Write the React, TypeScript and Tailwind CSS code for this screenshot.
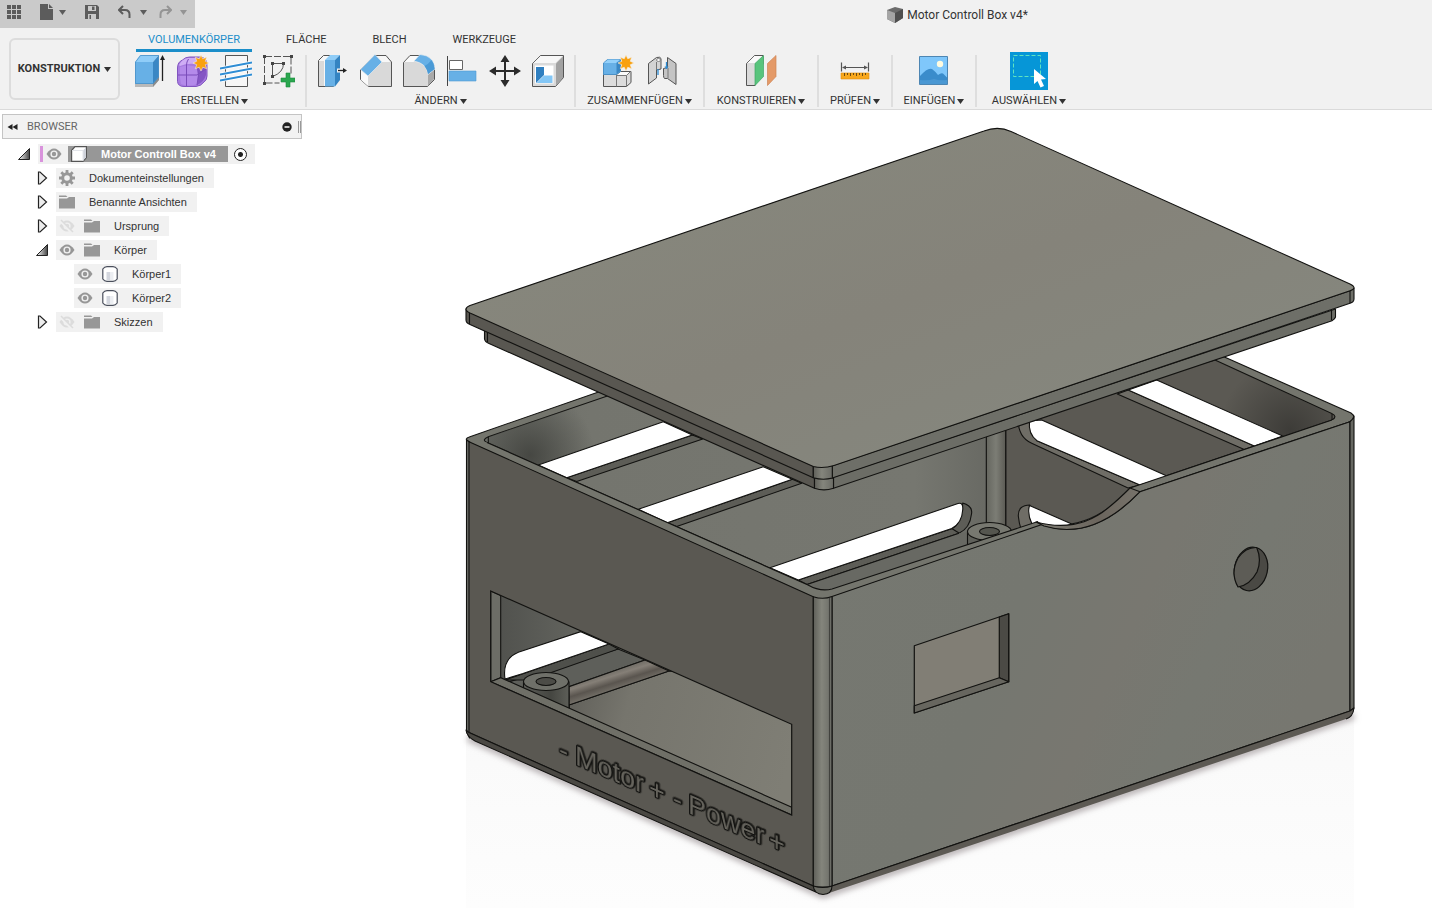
import type { ReactNode } from "react";

/* ---------- small shared pieces ---------- */

function Caret({ className = "text-[#333]" }: { className?: string }) {
  return (
    <svg viewBox="0 0 7 5" className={`h-[5px] w-[7px] shrink-0 ${className}`} aria-hidden="true">
      <path d="M0 0h7L3.5 5z" fill="currentColor" />
    </svg>
  );
}

function Star({ x, y }: { x: number; y: number }) {
  const points = Array.from({ length: 16 }, (_, i) => {
    const r = i % 2 === 0 ? 8 : 4.6;
    const a = (i * Math.PI) / 8;
    return `${(x + r * Math.sin(a)).toFixed(2)},${(y - r * Math.cos(a)).toFixed(2)}`;
  }).join(" ");
  return <polygon points={points} fill="#f9a10f" stroke="#f3f0ea" strokeWidth="0.6" />;
}

function ToolIcon({ x, children }: { x: number; children: ReactNode }) {
  return (
    <svg viewBox={`${x} 54 32 34`} className="h-[34px] w-8" aria-hidden="true">
      {children}
    </svg>
  );
}

/* ---------- ribbon icons ---------- */

const extrude = (
  <ToolIcon x={135}>
    <path d="M136 83h18l6-7v4l-6 7h-18z" fill="#b9b9b9" />
    <path d="M154 83l6-7v4l-6 7z" fill="#8c8c8c" />
    <path d="M136 62h18v22h-18z" fill="#67b0e6" />
    <path d="M136 62l5-7h19l-6 7z" fill="#8fcdf8" />
    <path d="M154 62l6-7v22l-6 7z" fill="#3a87c4" />
    <path d="M136.5 83.5v-21.500l5-6.500h18v21l-5.500 7z" fill="none" stroke="#4a90c6" strokeWidth="0.8" />
    <path d="M163.500 81V58" stroke="#222" strokeWidth="1.300" />
    <path d="M161 60l2.500-5 2.500 5z" fill="#222" />
  </ToolIcon>
);

const form = (
  <ToolIcon x={178}>
    <path d="M178.500 68q0-6 5-8 3-3 7-3h12q6 2 5.500 10v9q0 4-3 6-3 4-8 4.500h-12q-6 0-6.500-5z" fill="#a77be0" stroke="#8154bf" />
    <path d="M180 65q3-6 9-7h10l-3 6q-8-1-15 2z" fill="#cfaef5" />
    <path d="M199 66q7-2 8-1v10q-2 7-9 10z" fill="#8556c4" />
    <path d="M181 67q8-3 17 0 2 8 0 17-8 3-16 0-2-8-1-17z" fill="#b48aea" />
    <path d="M189.500 59q-2 3-2 6v21M179 75h19l9-6M198 65q3 10 0 20" fill="none" stroke="#7b4dba" strokeWidth="1" />
    <Star x={202} y={63} />
  </ToolIcon>
);

const coil = (
  <ToolIcon x={221}>
    <path d="M226.500 55.500h22v31h-22z" fill="#f6f6f6" stroke="#555" />
    <path d="M221 68.500l32-6M221 74.500l32-6M221 80.500l32-6" stroke="#fff" strokeWidth="3.500" />
    <path d="M221 68.500l32-6M221 74.500l32-6M221 80.500l32-6" stroke="#2f8dd4" strokeWidth="2" />
  </ToolIcon>
);

const sketch = (
  <ToolIcon x={264}>
    <path d="M266 56.500h26v18M265.500 57v26h15" fill="none" stroke="#555" strokeDasharray="7 2" />
    <path d="M273.500 63.500h11q0 9-11 13z" fill="none" stroke="#555" />
    <path d="M264 55h3v3h-3zM291 55h3v3h-3zM264 82h3v3h-3zM272 62h3v3h-3zM283 62h3v3h-3zM272 75h3v3h-3z" fill="#444" />
    <path d="M287 73h4v5h5v4h-5v5h-4v-5h-5v-4h5z" fill="#2aa74f" stroke="#1b8a3c" strokeWidth="0.6" />
  </ToolIcon>
);

const pressPull = (
  <ToolIcon x={318}>
    <path d="M319.500 60.500l5-5h10v31h-15z" fill="#f7f7f7" stroke="#555" />
    <path d="M320 61h5v25h-5z" fill="#d9d9d9" />
    <path d="M326 60h10v26.500h-10z" fill="#67b0e6" />
    <path d="M326 60l5-5h10l-5 5z" fill="#8fcdf8" />
    <path d="M336 60l5-5v25l-5 6.500z" fill="#3484c2" />
    <path d="M338 68.500h7v-2l4 4-4 4v-2h-7z" fill="#f1f1f1" />
    <path d="M339 70.500h6" stroke="#222" strokeWidth="1.300" />
    <path d="M344 68l4 2.500-4 2.500z" fill="#222" />
  </ToolIcon>
);

const chamfer = (
  <ToolIcon x={361}>
    <path d="M361.500 69.500l14.500-14h11l5.500 6.500v24.500h-23l-8-7z" fill="#d9d9d9" stroke="#555" />
    <path d="M376 56h10.500l5 6h-9.500z" fill="#f7f7f7" />
    <path d="M362 70l7 6v10l-7-6z" fill="#fafafa" />
    <path d="M376 54.500l7 7.500-14 14-7.500-6.500z" fill="#67b0e6" stroke="#f1f1f1" strokeWidth="0.6" />
  </ToolIcon>
);

const fillet = (
  <ToolIcon x={404}>
    <path d="M404.500 62.500l6.500-7h11q13 3 13.500 14v10l-7 7h-24z" fill="#d9d9d9" stroke="#555" />
    <path d="M405.500 62l6-6h9l-6 6z" fill="#fafafa" />
    <path d="M429 74l6-4v9l-6 7z" fill="#a9a9a9" />
    <path d="M415 61l6-6.500q14 1 15 14.500l-7 5.500q-1-11-14-13.500z" fill="#67b0e6" stroke="#f1f1f1" strokeWidth="0.6" />
    <path d="M429 74l6.500-5q0-5-3-9-3 4-7 6 3 4 3.500 8z" fill="#4a9ad6" />
  </ToolIcon>
);

const align = (
  <ToolIcon x={447}>
    <path d="M448.500 56v30" stroke="#444" />
    <path d="M450.500 60.500h13v9h-13z" fill="#fff" stroke="#666" />
    <path d="M450 71h27v10h-27z" fill="#67b0e6" stroke="#4d9bd4" strokeWidth="0.6" />
  </ToolIcon>
);

const move = (
  <ToolIcon x={490}>
    <path d="M506 59v24M494 71h24" stroke="#2b2b2b" strokeWidth="2" />
    <path d="M506 55l4.500 7h-9zM506 87l4.500-7h-9zM490 71l7-4.500v9zM522 71l-7-4.500v9z" fill="#2b2b2b" />
  </ToolIcon>
);

const shell = (
  <ToolIcon x={533}>
    <path d="M533.500 63.500l8-8h23v22l-8 9h-23z" fill="#dadada" stroke="#555" />
    <path d="M534.500 63l7-7h22l-7 7z" fill="#f7f7f7" />
    <path d="M557 63.500l7-7v21l-7 8z" fill="#a2a2a2" />
    <path d="M536 65.500h18.500v18h-18.500z" fill="#fff" />
    <path d="M537 67h8v8l-8 8z" fill="#2f7fc0" />
    <path d="M545 75.500h8.500v7.500h-16z" fill="#83c6f5" />
  </ToolIcon>
);

const newComponent = (
  <ToolIcon x={602}>
    <path d="M603.500 74.500h13l4-3h10.500v11l-4.500 4h-23z" fill="#dcdcdc" stroke="#555" />
    <path d="M617 75l3.500-3h10l-4 3z" fill="#fafafa" />
    <path d="M616.500 75v11.500M617 75.500h9.500v11M626.500 75.500l4-4" fill="none" stroke="#777" />
    <path d="M603.500 63l4-3.500h13v12l-4 3h-13z" fill="#67b0e6" stroke="#4a90c6" />
    <path d="M604 63l4-3.500h12l-4 3.500z" fill="#93d0fa" />
    <path d="M616.500 63l4-3v11l-4 3z" fill="#3a87c4" />
    <Star x={626} y={63} />
  </ToolIcon>
);

const joint = (
  <ToolIcon x={646}>
    <path d="M648.500 63.500l8-6q4-1 4.500 1v10.500l-4.500 1v8l-8 6z" fill="#d4d4d4" stroke="#555" />
    <path d="M656.500 62v8" stroke="#777" />
    <ellipse cx="658.500" cy="60" rx="2" ry="1.500" fill="#f7f7f7" stroke="#666" strokeWidth="0.700" />
    <path d="M667.500 57.500l8.500 6v21l-8.500-6h-3q-1-1-1-3v-7l4-1z" fill="#c4c4c4" stroke="#555" />
    <path d="M668 68v10" stroke="#777" />
    <path d="M658 69v6M666.500 62v7" stroke="#2f8dd4" strokeWidth="1.300" />
    <path d="M664.500 66.500l2 2.500 2-2.500z" fill="#2f8dd4" />
  </ToolIcon>
);

const plane = (
  <ToolIcon x={746}>
    <path d="M747.500 63.500l8-8h8.500v8l-8 22h-8.500z" fill="#dadada" stroke="#555" />
    <path d="M748.500 63l7-7h8l-7 7z" fill="#fafafa" />
    <path d="M756 63.500l8.500-8v21l-8.500 9z" fill="#58c47c" stroke="#41a865" strokeWidth="0.700" />
    <path d="M768.500 63.500l8.500-8v21l-8.500 9z" fill="#e49a68" stroke="#cf8455" strokeWidth="0.700" />
  </ToolIcon>
);

const measure = (
  <ToolIcon x={840}>
    <path d="M842.500 62.500v9M869.500 62.500v9M844 67.500h24" stroke="#555" strokeWidth="1.200" />
    <path d="M843 67.500l4-2v4zM869 67.500l-4-2v4z" fill="#555" />
    <path d="M842 73h28v6h-28z" fill="#f8a71b" stroke="#e08f0a" strokeWidth="0.600" />
    <path d="M845.500 73v3M848.500 73v2M851.500 73v3M854.500 73v2M857.500 73v3M860.500 73v2M863.500 73v3M866.500 73v2" stroke="#6b4a10" />
  </ToolIcon>
);

const insert = (
  <ToolIcon x={919}>
    <path d="M920.500 56.500h28v28h-28z" fill="#7fc7fb" stroke="#4d86b3" />
    <path d="M921 76q8-9 12-7 4 3 6 6 4-3 6-0.500l3 3v6.500h-27z" fill="#3a8ccb" />
    <path d="M921 80q8 1 14-1 6 2 13 1v4h-27z" fill="#4b98d3" />
    <circle cx="941" cy="64" r="3.200" fill="#fffbe0" />
  </ToolIcon>
);

const select = (
  <svg viewBox="1010 52 38 38" className="size-[38px] bg-[#0696d7]" aria-hidden="true">
    <path d="M1013.500 55.500h27v21h-27z" fill="none" stroke="#5fe3c0" strokeDasharray="4 2" />
    <path d="M1034 69v15l3.500-3 3 6.500 3.500-1.500-3-6.500 5-0.500z" fill="#fff" />
  </svg>
);

type Group = { label: string; width: string; gap: string; tools: [string, ReactNode][] };

const groups: Group[] = [
  { label: "ERSTELLEN", width: "w-[183px]", gap: "gap-[11px]", tools: [["Extrusion", extrude], ["Form", form], ["Spirale", coil], ["Skizze", sketch]] },
  { label: "ÄNDERN", width: "w-[269px]", gap: "gap-[11px]", tools: [["Drücken/Ziehen", pressPull], ["Fase", chamfer], ["Abrunden", fillet], ["Ausrichten", align], ["Verschieben", move], ["Schale", shell]] },
  { label: "ZUSAMMENFÜGEN", width: "w-[129px]", gap: "gap-3", tools: [["Neue Komponente", newComponent], ["Verbindung", joint]] },
  { label: "KONSTRUIEREN", width: "w-[114px]", gap: "gap-3", tools: [["Ebene", plane]] },
  { label: "PRÜFEN", width: "w-[74px]", gap: "gap-3", tools: [["Messen", measure]] },
  { label: "EINFÜGEN", width: "w-[84px]", gap: "gap-3", tools: [["Bild", insert]] },
  { label: "AUSWÄHLEN", width: "w-[104px]", gap: "gap-3", tools: [["Auswahl", select]] },
];

const tabs = ["VOLUMENKÖRPER", "FLÄCHE", "BLECH", "WERKZEUGE"];

/* ---------- header ---------- */

function QuickAccess() {
  return (
    <div className="flex h-7 w-[195px] shrink-0 items-start bg-[#cacaca] pt-1 pl-[7px] text-[#5c5c5c]">
      <button aria-label="Datenbereich" className="mr-[19px]">
        <svg viewBox="0 0 14 16" className="h-4 w-3.5">
          <path d="M0 1h4v4H0zM5 1h4v4H5zM10 1h4v4h-4zM0 6h4v4H0zM5 6h4v4H5zM10 6h4v4h-4zM0 11h4v4H0zM5 11h4v4H5zM10 11h4v4h-4z" fill="currentColor" />
        </svg>
      </button>
      <button aria-label="Datei" className="mr-[19px] flex items-center gap-1.5">
        <svg viewBox="0 0 13 16" className="h-4 w-[13px]">
          <path d="M0 0h8v5h5v11H0zM9 0l4 4H9z" fill="currentColor" />
        </svg>
        <Caret className="text-[#5c5c5c]" />
      </button>
      <button aria-label="Speichern" className="mr-[19px]">
        <svg viewBox="0 0 14 16" className="h-4 w-3.5">
          <path fillRule="evenodd" d="M0 1h12l2 2v12H0zM3 2v5h8V2zM3 10v5h8v-5zM7 2.500h2.500V6H7zM4.500 11H6v4H4.500z" fill="currentColor" />
        </svg>
      </button>
      <button aria-label="Rückgängig" className="mr-3 flex items-center gap-[9px]">
        <svg viewBox="0 0 13 16" className="h-4 w-[13px]">
          <path d="M5 2L1 6l4 4M1.500 6H7q4.500 0 4.500 4.500V14" fill="none" stroke="currentColor" strokeWidth="2" />
        </svg>
        <Caret className="text-[#5c5c5c]" />
      </button>
      <button aria-label="Wiederherstellen" className="flex items-center gap-2 text-[#949494]">
        <svg viewBox="0 0 13 16" className="h-4 w-[13px]">
          <path d="M8 2l4 4-4 4M11.500 6H6q-4.500 0-4.500 4.500V14" fill="none" stroke="currentColor" strokeWidth="2" />
        </svg>
        <Caret className="text-[#949494]" />
      </button>
    </div>
  );
}

function Header() {
  return (
    <header className="border-b border-[#dadada] bg-[#f1f1f1] font-[Roboto,sans-serif] text-[11px] leading-3 text-[#333]">
      <div className="flex h-7">
        <QuickAccess />
        <div className="flex flex-1 items-center justify-center gap-1 pt-0.5 pl-[288px]">
          <svg viewBox="0 0 16 16" className="size-4" aria-hidden="true">
            <path d="M0 3l8-3 8 2v9l-8 5-8-4z" fill="#6b6b6b" />
            <path d="M0 3l8 3v10l-8-4z" fill="#a5a5a5" />
            <path d="M8 6l8-4v9l-8 5z" fill="#4f4f4f" />
          </svg>
          <h1 className="text-xs">Motor Controll Box v4*</h1>
        </div>
      </div>
      <div className="flex">
        <button className="mt-2.5 ml-[9px] flex h-[62px] w-[111px] shrink-0 items-center justify-center gap-1 rounded-md border-2 border-[#dcdcdc] font-bold">
          KONSTRUKTION
          <Caret />
        </button>
        <div className="flex flex-1 flex-col pl-1">
          <nav className="flex h-6 gap-[22px] pl-3">
            {tabs.map((tab, i) => (
              <button
                key={tab}
                className={
                  i === 0
                    ? "border-b-3 border-[#1b8ec9] px-3 pt-0.5 text-[#1b8ec9]"
                    : "border-b-3 border-transparent px-3 pt-0.5"
                }
              >
                {tab}
              </button>
            ))}
          </nav>
          <div className="flex pb-0.5">
            {groups.map((group, i) => (
              <section key={group.label} className={`flex shrink-0 ${group.width}`}>
                <div className="flex flex-1 flex-col items-center">
                  <div className={`flex h-[38px] items-center ${group.gap}`}>
                    {group.tools.map(([name, icon]) => (
                      <button key={name} aria-label={name}>
                        {icon}
                      </button>
                    ))}
                  </div>
                  <button className="mt-[5px] flex items-center gap-0.5">
                    {group.label}
                    <Caret />
                  </button>
                </div>
                {i < groups.length - 1 && <div className="mt-[3px] w-0.5 bg-[#dedede]" />}
              </section>
            ))}
          </div>
        </div>
      </div>
    </header>
  );
}

/* ---------- browser tree ---------- */

function Eye({ off = false }: { off?: boolean }) {
  return (
    <svg viewBox="0 0 16 16" className={off ? "size-4 text-[#dcdcdc]" : "size-4 text-[#979797]"} aria-hidden="true">
      <path d="M0.500 8Q4 2.500 8 2.500T15.500 8Q12 13.500 8 13.500T0.500 8z" fill="currentColor" />
      <circle cx="8" cy="8" r="3.600" fill="#f1f1f1" />
      <circle cx="8" cy="8" r="2.200" fill="currentColor" />
      {off && (
        <>
          <path d="M1.500 3l12 12" stroke="#f1f1f1" strokeWidth="3" />
          <path d="M2 2l12 12" stroke="currentColor" strokeWidth="1.500" />
        </>
      )}
    </svg>
  );
}

function Folder() {
  return (
    <svg viewBox="0 0 16 16" className="size-4" aria-hidden="true">
      <path d="M0 1.500h7l1.500 1.500H0zM0 4.500h8l2-1.500h6V14.500H0z" fill="#979797" />
    </svg>
  );
}

function Gear() {
  return (
    <svg viewBox="0 0 16 16" className="size-4" aria-hidden="true">
      <circle cx="8" cy="8" r="4.300" fill="none" stroke="#979797" strokeWidth="3" />
      <path d="M8 0v3M8 13v3M0 8h3M13 8h3M2.300 2.300l2.200 2.200M11.500 11.500l2.200 2.200M2.300 13.700l2.200-2.200M11.500 4.500l2.200-2.200" stroke="#979797" strokeWidth="2.800" />
    </svg>
  );
}

function Body() {
  return (
    <svg viewBox="0 0 16 16" className="size-4" aria-hidden="true">
      <path d="M0.800 3Q2.500 0.600 5 0.600h6Q13.500 0.600 15.200 3v10Q13.500 15.400 11 15.400h-6Q2.500 15.400 0.800 13z" fill="#fff" stroke="#4a4f5c" strokeWidth="1.200" />
      <path d="M4.500 6h4v8h-4z" fill="#d3d6de" />
      <path d="M8.500 6h3v8h-3z" fill="#eceef2" />
    </svg>
  );
}

function Twisty({ open }: { open: boolean }) {
  return (
    <svg viewBox="0 0 12 14" className="h-3.5 w-3 shrink-0" aria-hidden="true">
      {open ? (
        <path d="M11.500 1.500v11H0.500z" fill="url(#twistyFill)" stroke="#222" />
      ) : (
        <path d="M2.500 1h1.500l6.500 6L4 13H2.500z" fill="#ededed" stroke="#222" strokeWidth="1.200" />
      )}
      <defs>
        <linearGradient id="twistyFill">
          <stop offset="0.200" stopColor="#ddd" />
          <stop offset="1" stopColor="#444" />
        </linearGradient>
      </defs>
    </svg>
  );
}

type Node = { label: string; indent: string; twisty?: boolean; open?: boolean; icons: ReactNode[] };

const nodes: Node[] = [
  { label: "Dokumenteinstellungen", indent: "pl-9", twisty: true, icons: [<Gear key="g" />] },
  { label: "Benannte Ansichten", indent: "pl-9", twisty: true, icons: [<Folder key="f" />] },
  { label: "Ursprung", indent: "pl-9", twisty: true, icons: [<Eye key="e" off />, <Folder key="f" />] },
  { label: "Körper", indent: "pl-9", twisty: true, open: true, icons: [<Eye key="e" />, <Folder key="f" />] },
  { label: "Körper1", indent: "pl-[74px]", icons: [<Eye key="e" />, <Body key="b" />] },
  { label: "Körper2", indent: "pl-[74px]", icons: [<Eye key="e" />, <Body key="b" />] },
  { label: "Skizzen", indent: "pl-9", twisty: true, icons: [<Eye key="e" off />, <Folder key="f" />] },
];

function BrowserPanel() {
  return (
    <aside className="w-[302px] shrink-0 pt-1 text-[11px] leading-3 text-[#333]">
      <div className="ml-0.5 flex h-[25px] items-center border border-[#c4c4c4] bg-[#f2f2f2] pl-1">
        <button aria-label="Einklappen">
          <svg viewBox="0 0 12 8" className="h-2 w-3">
            <path d="M5.500 1v6L0.500 4zM10.500 1v6L5.500 4z" fill="#222" />
          </svg>
        </button>
        <h2 className="ml-2 flex-1 font-[Roboto,sans-serif] text-[#666]">BROWSER</h2>
        <button aria-label="Schließen" className="mr-1.5">
          <svg viewBox="0 0 10 10" className="size-2.5">
            <circle cx="5" cy="5" r="4.700" fill="#222" />
            <path d="M2.500 5h5" stroke="#fff" strokeWidth="1.500" />
          </svg>
        </button>
        <div className="h-3 w-[3px] border-x border-[#999]" />
      </div>

      <ul className="pt-[3px]">
        <li className="flex h-6 items-center gap-2 pl-[18px]">
          <Twisty open />
          <div className="flex h-5 items-center bg-[#f1f1f1] pr-2 pl-0.5">
            <div className="h-4 w-[3px] bg-[#d993dc]" />
            <button aria-label="Sichtbarkeit" className="ml-[3px]">
              <Eye />
            </button>
            <div className="ml-1.5 flex h-4 items-center bg-[#979797] pr-3 pl-[3px] font-bold text-white">
              <svg viewBox="0 0 16 16" className="mr-3.5 size-4" aria-hidden="true">
                <path d="M0.600 4.500L4 0.600h11.400v10.900L12 15.400H0.600z" fill="#fff" stroke="#555" strokeWidth="1.200" />
                <path d="M12 4.500l3-3v10l-3 3z" fill="#cfd2da" />
                <path d="M1 4.500h11v10.500" fill="none" stroke="#e3e5ea" />
              </svg>
              Motor Controll Box v4
            </div>
            <label className="ml-1.5 flex items-center">
              <input type="radio" defaultChecked aria-label="Komponente aktivieren" className="size-[13px] appearance-none rounded-full border border-[#222] bg-[radial-gradient(#222_2px,white_3px)]" />
            </label>
          </div>
        </li>
        {nodes.map((node) => (
          <li key={node.label} className={`flex h-6 items-center gap-2 ${node.indent}`}>
            {node.twisty && <Twisty open={!!node.open} />}
            <div className="flex h-5 items-center gap-[9px] bg-[#f1f1f1] pr-2.5 pl-[3px]">
              {node.icons}
              <span className="pl-[5px]">{node.label}</span>
            </div>
          </li>
        ))}
      </ul>
    </aside>
  );
}

/* ---------- model view ---------- */

function Model() {
  return (
    <svg viewBox="302 110 1130 798" className="min-w-0 flex-1" role="img" aria-label="Motor Controll Box">
      <defs>
        <linearGradient id="lidTop" x1="0" y1="0" x2="1" y2="1">
          <stop offset="0" stopColor="#87857b" />
          <stop offset="0.250" stopColor="#86867c" />
          <stop offset="0.500" stopColor="#85837a" />
          <stop offset="0.750" stopColor="#85867d" />
          <stop offset="1" stopColor="#848077" />
        </linearGradient>
        <linearGradient id="rightFace" x1="0" y1="0" x2="1" y2="0.400">
          <stop offset="0" stopColor="#767871" />
          <stop offset="0.450" stopColor="#757770" />
          <stop offset="0.650" stopColor="#787770" />
          <stop offset="0.800" stopColor="#767871" />
          <stop offset="1" stopColor="#777770" />
        </linearGradient>
        <linearGradient id="post">
          <stop offset="0" stopColor="#5f5f59" />
          <stop offset="0.450" stopColor="#84857c" />
          <stop offset="1" stopColor="#6b6c66" />
        </linearGradient>
        <linearGradient id="cornerPost">
          <stop offset="0" stopColor="#65665f" />
          <stop offset="0.500" stopColor="#7c7d75" />
          <stop offset="1" stopColor="#5b5a54" />
        </linearGradient>
        <linearGradient id="backWall" gradientUnits="userSpaceOnUse" x1="490" y1="0" x2="990" y2="0">
          <stop offset="0" stopColor="#6b6d67" />
          <stop offset="0.200" stopColor="#74756e" />
          <stop offset="0.850" stopColor="#767770" />
          <stop offset="1" stopColor="#686963" />
        </linearGradient>
        <radialGradient id="shadeL" gradientUnits="userSpaceOnUse" cx="530" cy="455" r="65">
          <stop offset="0" stopColor="#3c3d39" stopOpacity="0.800" />
          <stop offset="1" stopColor="#3c3d39" stopOpacity="0" />
        </radialGradient>
        <radialGradient id="shadeR" gradientUnits="userSpaceOnUse" cx="1290" cy="430" r="70">
          <stop offset="0" stopColor="#33322f" stopOpacity="0.750" />
          <stop offset="1" stopColor="#33322f" stopOpacity="0" />
        </radialGradient>
        <linearGradient id="windowWall" gradientUnits="userSpaceOnUse" x1="500" y1="0" x2="600" y2="0">
          <stop offset="0" stopColor="#51524e" />
          <stop offset="1" stopColor="#686963" />
        </linearGradient>
        <linearGradient id="floor" gradientUnits="userSpaceOnUse" x1="570" y1="700" x2="790" y2="760">
          <stop offset="0" stopColor="#62615b" />
          <stop offset="0.250" stopColor="#76756d" />
          <stop offset="1" stopColor="#7f7e75" />
        </linearGradient>
        <linearGradient id="round" gradientUnits="userSpaceOnUse" x1="605" y1="670" x2="612" y2="692">
          <stop offset="0" stopColor="#65635c" />
          <stop offset="0.350" stopColor="#857f77" />
          <stop offset="0.650" stopColor="#5a554f" />
          <stop offset="1" stopColor="#77736b" />
        </linearGradient>
        <linearGradient id="boss">
          <stop offset="0" stopColor="#5c5d58" />
          <stop offset="0.600" stopColor="#454641" />
          <stop offset="1" stopColor="#5d5e58" />
        </linearGradient>
        <linearGradient id="notch">
          <stop offset="0" stopColor="#807f76" />
          <stop offset="0.600" stopColor="#6b655d" />
          <stop offset="1" stopColor="#77736b" />
        </linearGradient>
        <linearGradient id="ground" x1="0" y1="0" x2="0" y2="1">
          <stop offset="0" stopColor="#f9f9f9" />
          <stop offset="1" stopColor="#fdfdfd" />
        </linearGradient>
        <filter id="soft" x="-10%" y="-10%" width="120%" height="120%">
          <feGaussianBlur stdDeviation="3" />
        </filter>
        <clipPath id="frontWindow">
          <path d="M490.700 591L791.700 724.300V815L490.700 681.700z" />
        </clipPath>
      </defs>

      {/* ground and contact shadow */}
      <path d="M466 735L823 893 1354 714V908H466z" fill="url(#ground)" />
      <path d="M468 738L823 895 1354 716" fill="none" stroke="#a9a2a4" strokeWidth="6" filter="url(#soft)" />

      <g stroke="#121210" strokeWidth="1.100" strokeLinejoin="round">
        {/* rim, seen around the interior */}
        <path d="M470 436.700L900 287 1225 357.300 1351 413Q1357 417 1350 421.700L832 596.500Q823 600 813.300 596.700L469 441.700Q463 439 470 436.700z" fill="#74756d" />

        {/* interior walls */}
        <path d="M488.300 436.700L800 330H987V560L832 589Q820 592 808 585L487 442.500Q481 440 488.300 436.700z" fill="url(#backWall)" />
        <path d="M488 437L606 396 664 421 538 465 488 443z" fill="url(#shadeL)" stroke="none" />
        <path d="M488.300 437V443" fill="none" />
        <path d="M1005.700 420L1215 360 1331.700 413.500Q1338 416.500 1332 420L1130 488Q1090 534 1038 523L1005.700 533z" fill="#5b5953" />
        <path d="M1215 360L1331 414v6l-50 17-125-57z" fill="url(#shadeR)" stroke="none" />
        <path d="M1332 414V420" fill="none" />
        <path d="M986.300 420H1005.700V535L986.300 540z" fill="url(#cornerPost)" />

        {/* slots in the back wall */}
        <g fill="#5d5d57">
          <path d="M566.700 477.700L692.300 435l10.400 4L576.700 481.500z" />
          <path d="M667.300 522.700L792.300 479.300l9.400 4L676.700 526.500z" />
          <path d="M798.300 580L951.700 528.700Q962 524 962.700 503 973 506 971.500 514 970 528 959 533.300L807 584.500z" />
        </g>
        <path d="M807 584.500L959 533.300 968 532 990 545 832 595Q820 592 812 588z" fill="#686963" stroke="none" />
        <path d="M807 584.500L959 533.300M951.700 528.500L959 533" fill="none" />
        <g fill="#fff">
          <path d="M538.300 465L663.300 421.700 692.300 435 566.700 477.700z" />
          <path d="M638.300 509.300L763.300 466.700 792.300 479.300 667.300 522.700z" />
          <path d="M770 567.700L958 503.500Q963.500 502 962.700 510 962 523 951.700 528.500L798.300 580z" />
        </g>

        {/* slots in the side wall */}
        <g fill="#6f6d66">
          <path d="M1018.300 420Q1018 437 1031.700 443.300L1128 488 1140 485 1037 440.700 1029 420z" />
          <path d="M1117.300 394L1128.300 390 1254.300 446 1244.300 449.500z" />
          <path d="M1030 505Q1018 505 1018.300 516 1019 523 1021 529L1032 525z" />
        </g>
        <g fill="#fff">
          <path d="M1041.700 420L1168 476.500 1140 485 1037 440.700Q1028 434 1029.500 421z" />
          <path d="M1128.300 390L1156.700 380 1282.700 436 1254.300 446z" />
          <path d="M1029.500 505.500L1071.700 524 1060 528 1032 524Q1027 514 1029.500 505.500z" />
        </g>

        {/* screw boss at the back */}
        <path d="M967.500 531V545L1012 532V531z" fill="#5f605a" />
        <ellipse cx="989.500" cy="531.500" rx="22" ry="9" fill="#777870" />
        <ellipse cx="989.500" cy="531.500" rx="10" ry="4" fill="#55564f" />

        {/* front and right rim with cable notch */}
        <path d="M487 442.500L808 585Q820 592 832 589L1038 521.500 1042 524.500 832 596.500Q823 600 813.300 596.700L469 441.700 478 440z" fill="#74756d" stroke="none" />
        <path d="M487 442.500L808 585Q820 592 832 589L1038 521.500" fill="none" />
        <path d="M1130 488L1332 420 1350 421.700 1140 491.700z" fill="#74756d" stroke="none" />
        <path d="M1130 488L1332 420M1140 491.700L1350 421.700" />

        {/* outer faces */}
        <path d="M466.500 440L469.500 442V738L466.500 732z" fill="#6b6c66" />
        <path d="M469 441.700L813.300 596.700V886L469 732.500z" fill="#5a5852" />
        <path d="M832 596.500L1042 524.500Q1091 543 1140 491.700L1350 421.700V711L832 886z" fill="url(#rightFace)" />
        <path d="M1036 522Q1078 533 1108 508 1118 500 1130 488L1140 491.700Q1093 541 1044 526z" fill="url(#notch)" />
        <path d="M1350 421.700Q1353.500 419 1354 416V708L1350 711z" fill="#666761" />
        <path d="M813.300 596.700Q823 600 832 596.500V887H813.300z" fill="url(#post)" />
        <path d="M829.500 598V886" strokeOpacity="0.500" />

        {/* bottom bevel */}
        <path d="M469 732.500L813.300 886 817 892.500 475 741Q467 737 466 730z" fill="#4a4843" />
        <path d="M832 886L1350 711 1354 708Q1353 717 1346 719L829 893z" fill="#5d5a54" stroke="none" />
        <path d="M832 886L1350 711 1354 708Q1353 717 1346 719" fill="none" />
        <path d="M813.300 886Q823 889 832 886 832 894 823 894.500 814 894 813.300 886z" fill="#6c6c65" />
      </g>

      {/* front window */}
      <g clipPath="url(#frontWindow)" stroke="#121210" strokeWidth="1.100">
        <path d="M490 590H792V816H490z" fill="url(#windowWall)" stroke="none" />
        <path d="M569 705L669 671 800 690V830H569z" fill="url(#floor)" />
        <path d="M505 683L618 649 645 660 569 686.700V710z" fill="#5e5f5a" />
        <path d="M505 680L609 644 618.300 649 530 680z" fill="#4f504b" />
        <path d="M569 686.700L645 660 669 671 569 705z" fill="url(#round)" />
        <path d="M518.300 652.300L580.700 631.700 609 644 523 673.500 505 679Q502 659 518.300 652.300z" fill="#fff" />
        <path d="M523.500 682V700L569 720V682z" fill="url(#boss)" />
        <ellipse cx="546" cy="681.500" rx="22.500" ry="9" fill="#6f7069" />
        <ellipse cx="546" cy="681.500" rx="10" ry="4" fill="#4c4c47" />
        <path d="M490.700 591L500.700 595.500V677.700L490.700 681.700z" fill="#6c6d66" />
        <path d="M490.700 681.700L500.700 677.700 791.700 807.300V815z" fill="#6f6f67" />
      </g>
      <path d="M490.700 591L791.700 724.300V815L490.700 681.700z" fill="none" stroke="#121210" strokeWidth="1.200" />

      {/* display cut-out and round hole */}
      <g stroke="#121210" strokeWidth="1.200" strokeLinejoin="round">
        <path d="M914.300 645.700L1008.700 613.700V681.700L914.300 713z" fill="#817e75" />
        <path d="M999.300 617L1008.700 613.700V681.700L999.300 677.700z" fill="#4b4a45" />
        <path d="M914.300 705.700L999.300 677.700 1008.700 681.700 914.300 713z" fill="#67665f" />
        <ellipse cx="1251" cy="569" rx="16.500" ry="22" transform="rotate(12 1251 569)" fill="#4a4944" />
        <path d="M1256.700 547.500Q1262 560 1257 572 1250 585 1238 587 1230 573 1238 558 1246 547 1256.700 547.500z" fill="#5d5c56" />
      </g>

      {/* embossed lettering on the sheared front plane */}
      <text
        transform="matrix(1 0.430 0 1 0 0)"
        y="517"
        className="font-['Liberation_Sans',Arial,sans-serif] text-[27px] drop-shadow-[1px_-1px_0_#2a2925]"
        fill="#66645d"
        stroke="#121210"
        strokeWidth="2.600"
        strokeLinejoin="round"
        paintOrder="stroke"
      >
        <tspan x="559">-</tspan>
        <tspan x="575">Motor</tspan>
        <tspan x="649">+</tspan>
        <tspan x="673">-</tspan>
        <tspan x="688">Power</tspan>
        <tspan x="769">+</tspan>
      </text>

      {/* lid */}
      <g stroke="#121210" strokeWidth="1.100" strokeLinejoin="round">
        <path d="M484.500 330V339Q485 342 489 343.500L814.500 488.300V476z" fill="#595751" />
        <path d="M833.500 477L1335.500 309V317Q1335 319 1332 320.700L833.500 488.300z" fill="#6c6d66" />
        <path d="M1331.500 309.500V320.500" />
        <path d="M487.500 332V342" />
        <path d="M814.500 478H833.500V488.300Q824 491.500 814.500 488.300z" fill="url(#post)" />
        <path d="M466 309V320Q466 323 470 324.500L813.300 477.700V466z" fill="#595751" />
        <path d="M832.300 465.700L1350 290.700 1354 288V299Q1354 302 1350 303.300L832.300 478z" fill="#6e6f68" />
        <path d="M1350 290.700V303.300M469.500 313V324" />
        <path d="M813.300 466H832.300V478Q823 480.500 813.300 477.700z" fill="url(#post)" />
        <path d="M470 305.500L984 131Q998 125.500 1011 131.500L1350 284Q1358 288 1350 290.700L834 465.500Q823 469 813.300 466.500L470 313Q462 309 470 305.500z" fill="url(#lidTop)" />
      </g>
    </svg>
  );
}

export default function App() {
  return (
    <div className="flex min-h-screen flex-col bg-white font-['Liberation_Sans',Arial,sans-serif]">
      <Header />
      <main className="flex flex-1 items-start">
        <BrowserPanel />
        <Model />
      </main>
    </div>
  );
}
